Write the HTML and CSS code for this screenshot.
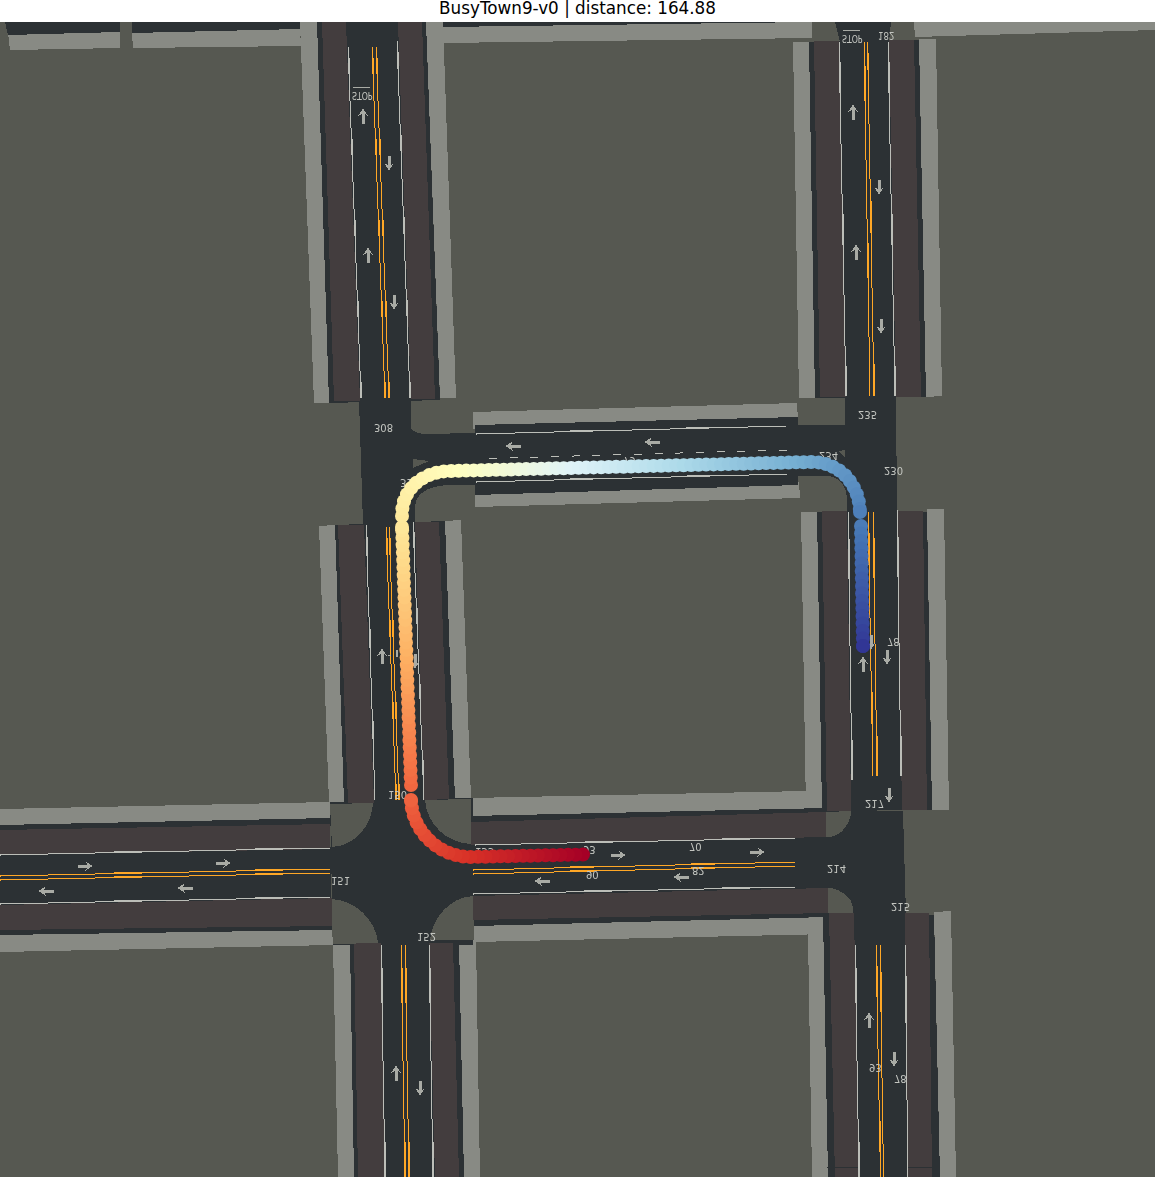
FILE: index.html
```html
<!DOCTYPE html>
<html lang="en">
<head>
<meta charset="utf-8">
<title>BusyTown9-v0</title>
<link rel="stylesheet" href="styles.css">
</head>
<body>
<header class="title">BusyTown9-v0 | distance: 164.88</header>
<svg class="map" viewBox="0 22 1155 1155" width="1155" height="1155" xmlns="http://www.w3.org/2000/svg">
  <defs>
    <path id="arrow" d="M0,-7.5 L4.5,-0.5 L1.5,-2 L1.5,7.5 L-1.5,7.5 L-1.5,-2 L-4.5,-0.5 Z"/>
  </defs>
  <g class="crisp">
    <rect class="ground" x="0" y="22" width="1155" height="1155"/>

    <g class="walk">
      <polygon points="8,33 120,32 120,48 10,50"/>
      <polygon points="132,33 300,29 301,46 133,48"/>
      <polygon points="443,27 812,22 812,38 443,43"/>
      <polygon points="914,22 1155,22 1155,30 915,37"/>
      <polygon points="300,22 317,22 329,403 314,403"/>
      <polygon points="426,22 443,22 456,398 440,398"/>
      <polygon points="793,42 809,42 815,398 799,398"/>
      <polygon points="919,39 936,39 942,396 926,397"/>
      <polygon points="473,412 797,403 798,420 473,429"/>
      <polygon points="475,490 799,482 800,498 475,507"/>
      <polygon points="319,526 335,525 345,803 329,803"/>
      <polygon points="445,521 461,520 471,799 455,800"/>
      <polygon points="801,512 817,512 822,811 806,811"/>
      <polygon points="927,509 944,509 949,810 932,810"/>
      <polygon points="470,798 806,791 806,809 470,816"/>
      <polygon points="474,926 829,917 829,934 474,942"/>
      <polygon points="0,809 330,802 330,818 0,825"/>
      <polygon points="0,935 332,928 333,945 0,952"/>
      <polygon points="333,944 350,944 354,1177 338,1177"/>
      <polygon points="459,940 476,940 480,1177 463,1177"/>
      <polygon points="808,934 824,934 828,1177 812,1177"/>
      <polygon points="934,912 951,911 956,1177 940,1177"/>
    </g>

    <g class="road">
      <polygon points="5,22 120,22 120,32 8,35"/>
      <polygon points="132,22 300,22 300,29 132,33"/>
      <polygon points="443,22 812,22 443,27"/>
      <polygon points="317,22 426,22 440,400 329,403"/>
      <polygon points="835,22 891,22 889,42 840,42"/>
      <polygon points="809,42 919,40 926,397 815,398"/>
      <path d="M359,400 L411,400 L411,428 Q413,433 425,434 L475,433 L475,425 L798,417 L798,425 L845,425 L845,397 L896,397 L897,512 L847,512 L847,500 Q846,477 827,476 L798,476 L798,485 L475,495 L475,485 L448,485 Q416,487 415,507 L415,522 L363,525 Z"/>
      <polygon points="335,525 445,521 455,800 344,803"/>
      <polygon points="817,512 927,512 932,810 822,811"/>
      <polygon points="470,816 826,808 828,917 474,926"/>
      <polygon points="0,825 330,818 332,930 0,935"/>
      <polygon points="330,802 473,798 473,945 333,945"/>
      <polygon points="826,811 903,811 906,915 828,915"/>
      <polygon points="350,943 459,941 464,1177 354,1177"/>
      <polygon points="823,915 934,915 940,1177 828,1177"/>
    </g>

    <g class="verge">
      <polygon points="322,22 346,22 360,401 334,401"/>
      <polygon points="398,22 422,22 435,399 411,399"/>
      <polygon points="814,41 839,41 846,397 820,397"/>
      <polygon points="889,40 914,40 921,397 896,397"/>
      <polygon points="338,525 364,525 374,803 348,803"/>
      <polygon points="415,522 439,522 449,799 424,800"/>
      <polygon points="822,511 847,511 851,811 827,811"/>
      <polygon points="897,511 923,511 927,810 902,810"/>
      <polygon points="0,830 330,824 330,849 0,855"/>
      <polygon points="0,905 332,898 332,926 0,930"/>
      <polygon points="471,822 826,812 826,837 471,845"/>
      <polygon points="473,896 828,888 828,913 473,920"/>
      <polygon points="354,943 381,943 385,1177 358,1177"/>
      <polygon points="429,943 453,943 459,1177 435,1177"/>
      <polygon points="829,913 854,913 859,1177 835,1177"/>
      <polygon points="905,913 929,913 932,1177 908,1177"/>
    </g>

    <g class="ground">
      <path d="M330,804 L373,803 C372,825 355,846 332,847 Z"/>
      <path d="M425,800 L471,799 L471,844 C447,843 427,825 425,800 Z"/>
      <path d="M332,899 C355,900 376,920 378,943 L333,944 Z"/>
      <path d="M473,896 C450,897 432,918 430,940 L473,940 Z"/>
      <path d="M826,812 L851,811 C851,822 842,836 830,837 L826,837 Z"/>
      <path d="M828,888 L831,888 C842,890 852,898 853,907 L853,913 L828,913 Z"/>
      <polygon points="413,459 429,461 413,468"/>
      <polygon points="838,451 845,450 845,458"/>
    </g>

    <rect class="road" x="827" y="1167" width="113" height="1"/>

    <g class="white lanes">
      <line x1="348" y1="47" x2="361" y2="398"/>
      <line x1="397" y1="41" x2="410" y2="398"/>
      <line x1="839" y1="42" x2="846" y2="396"/>
      <line x1="888" y1="42" x2="895" y2="396"/>
      <line x1="848" y1="512" x2="852" y2="780"/>
      <line x1="897" y1="510" x2="901" y2="776"/>
      <line x1="366" y1="525" x2="375" y2="800"/>
      <line x1="413" y1="522" x2="424" y2="800"/>
      <line x1="381" y1="945" x2="385" y2="1177"/>
      <line x1="429" y1="945" x2="433" y2="1177"/>
      <line x1="855" y1="945" x2="859" y2="1177"/>
      <line x1="905" y1="945" x2="908" y2="1177"/>
      <line x1="476" y1="434" x2="786" y2="426"/>
      <line x1="476" y1="482" x2="787" y2="474"/>
      <line x1="0" y1="855" x2="330" y2="848"/>
      <line x1="0" y1="904" x2="330" y2="897"/>
      <line x1="475" y1="845" x2="795" y2="838"/>
      <line x1="473" y1="894" x2="795" y2="887"/>
    </g>
    <g class="white">
      <line class="dash" x1="489" y1="458.4" x2="787" y2="450"/>
    </g>
    <g class="amber lanes">
      <line x1="372" y1="47" x2="385" y2="398"/>
      <line x1="376" y1="47" x2="389" y2="398"/>
      <line x1="864" y1="42" x2="870" y2="396"/>
      <line x1="867.5" y1="42" x2="874" y2="396"/>
      <line x1="868" y1="512" x2="873" y2="776"/>
      <line x1="873" y1="512" x2="877" y2="776"/>
      <line x1="386" y1="527" x2="396" y2="800"/>
      <line x1="389" y1="527" x2="399" y2="800"/>
      <line x1="401" y1="945" x2="405" y2="1177"/>
      <line x1="405" y1="945" x2="409" y2="1177"/>
      <line x1="876" y1="945" x2="880.5" y2="1177"/>
      <line x1="880" y1="945" x2="883.5" y2="1177"/>
      <line x1="0" y1="876" x2="330" y2="869"/>
      <line x1="0" y1="880" x2="330" y2="873"/>
      <line x1="473" y1="870" x2="795" y2="862"/>
      <line x1="473" y1="874" x2="795" y2="866"/>
    </g>
    <g class="arrows">
      <use href="#arrow" transform="translate(363 116)"/>
      <use href="#arrow" transform="translate(389 163) rotate(180)"/>
      <use href="#arrow" transform="translate(368 255)"/>
      <use href="#arrow" transform="translate(394 302) rotate(180)"/>
      <use href="#arrow" transform="translate(853 112)"/>
      <use href="#arrow" transform="translate(879 187) rotate(180)"/>
      <use href="#arrow" transform="translate(856 252)"/>
      <use href="#arrow" transform="translate(881 326) rotate(180)"/>
      <use href="#arrow" transform="translate(863 664)"/>
      <use href="#arrow" transform="translate(871 642) rotate(180)"/>
      <use href="#arrow" transform="translate(887 657) rotate(180)"/>
      <use href="#arrow" transform="translate(889 795) rotate(180)"/>
      <use href="#arrow" transform="translate(382 656)"/>
      <use href="#arrow" transform="translate(415 661) rotate(180)"/>
      <use href="#arrow" transform="translate(396 1073)"/>
      <use href="#arrow" transform="translate(420 1088) rotate(180)"/>
      <use href="#arrow" transform="translate(869 1020)"/>
      <use href="#arrow" transform="translate(894 1059) rotate(180)"/>
      <use href="#arrow" transform="translate(85 866) rotate(90)"/>
      <use href="#arrow" transform="translate(223 863) rotate(90)"/>
      <use href="#arrow" transform="translate(46 891) rotate(-90)"/>
      <use href="#arrow" transform="translate(185 888) rotate(-90)"/>
      <use href="#arrow" transform="translate(618 855) rotate(90)"/>
      <use href="#arrow" transform="translate(757 852) rotate(90)"/>
      <use href="#arrow" transform="translate(542 881) rotate(-90)"/>
      <use href="#arrow" transform="translate(681 877) rotate(-90)"/>
      <use href="#arrow" transform="translate(513 446) rotate(-90)"/>
      <use href="#arrow" transform="translate(652 442) rotate(-90)"/>
    </g>
    <g class="bars">
      <rect x="353" y="87" width="17" height="1"/>
      <rect x="843" y="30" width="17" height="1"/>
      <rect x="388" y="655" width="3" height="1"/>
      <rect x="396" y="650" width="2" height="7"/>
    </g>
  </g>

  <g class="labels">
    <text transform="translate(352 92) scale(.78 -1)">STOP</text>
    <text transform="translate(842 35) scale(.78 -1)">STOP</text>
    <text transform="translate(878 32) scale(.86 -1)">182</text>
    <text transform="translate(374 424) scale(1 -1)">308</text>
    <text transform="translate(400 479) scale(1 -1)">310</text>
    <text transform="translate(858 411) scale(1 -1)">235</text>
    <text transform="translate(884 467) scale(1 -1)">230</text>
    <text transform="translate(819 452) scale(1 -1)">234</text>
    <text transform="translate(623 457) scale(1 -1)">79</text>
    <text transform="translate(865 800) scale(1 -1)">217</text>
    <text transform="translate(827 865) scale(1 -1)">214</text>
    <text transform="translate(891 903) scale(1 -1)">215</text>
    <text transform="translate(388 791) scale(1 -1)">150</text>
    <text transform="translate(331 877) scale(1 -1)">151</text>
    <text transform="translate(417 933) scale(1 -1)">152</text>
    <text transform="translate(475 848) scale(1 -1)">153</text>
    <text transform="translate(583 846) scale(1 -1)">93</text>
    <text transform="translate(586 871) scale(1 -1)">90</text>
    <text transform="translate(689 843) scale(1 -1)">70</text>
    <text transform="translate(692 867) scale(1 -1)">82</text>
    <text transform="translate(887 638) scale(1 -1)">78</text>
    <text transform="translate(894 1075) scale(1 -1)">78</text>
    <text transform="translate(869 1064) scale(1 -1)">93</text>
  </g>

  <g id="trail"></g>
</svg>
<script src="map.js"></script>
</body>
</html>
```
FILE: styles.css
```css
html, body {
  margin: 0;
  padding: 0;
  background: #ffffff;
}

.title {
  height: 22px;
  line-height: 17px;
  text-align: center;
  font-family: "DejaVu Sans", sans-serif;
  font-size: 16.8px;
  color: #000000;
  white-space: nowrap;
}

.map {
  display: block;
}

.crisp {
  shape-rendering: crispEdges;
}

.ground {
  fill: #565851;
}

.walk {
  fill: #888a84;
}

.road {
  fill: #2c3134;
}

.verge {
  fill: #433d3e;
}

.white line,
.white path {
  stroke: #bcbeb8;
  stroke-width: 1;
  fill: none;
}

.white .dash {
  stroke-dasharray: 8 12.7;
}

.amber path {
  stroke: #ffa726;
  stroke-width: 1;
  fill: none;
}

.arrows {
  fill: #a9aba5;
}

.bars {
  fill: #a9aba5;
}

.labels {
  opacity: 0.99;
}

.labels text {
  font-family: "DejaVu Sans", sans-serif;
  font-size: 10px;
  fill: #c6c8c3;
}
```
FILE: map.js
```js
(function () {
  var NS = "http://www.w3.org/2000/svg";

  /* Lane markings: each straight line becomes a stair of whole-pixel runs.
     Every third run overlaps the previous one, which reads as a thicker stretch. */
  function stepped(x1, y1, x2, y2) {
    var vertical = Math.abs(y2 - y1) >= Math.abs(x2 - x1);
    var a0 = vertical ? y1 : x1, a1 = vertical ? y2 : x2;
    var b0 = vertical ? x1 : y1, b1 = vertical ? x2 : y2;
    var slope = (b1 - b0) / (a1 - a0);

    var runs = [], start = a0, cur = Math.floor(b0) + 0.5;
    for (var a = a0 + 1; a <= a1; a++) {
      var next = Math.floor(b0 + (a - a0) * slope) + 0.5;
      if (next !== cur) {
        runs.push([cur, start, a]);
        start = a;
        cur = next;
      }
    }
    runs.push([cur, start, a1]);

    function seg(b, from, to) {
      return vertical ? "M" + b + "," + from + "V" + to : "M" + from + "," + b + "H" + to;
    }
    return runs.map(function (r, i) {
      var from = r[1];
      if (i % 3 === 1) { from -= Math.round((runs[i - 1][2] - runs[i - 1][1]) * 0.6); }
      return seg(r[0], from, r[2]);
    }).join("");
  }

  document.querySelectorAll(".lanes line").forEach(function (line) {
    var get = function (n) { return parseFloat(line.getAttribute(n)); };
    var path = document.createElementNS(NS, "path");
    path.setAttribute("d", stepped(get("x1"), get("y1"), get("x2"), get("y2")));
    line.parentNode.replaceChild(path, line);
  });

  /* Trajectory of the agent: runs of waypoints, sampled into evenly spaced dots. */
  var RADIUS = 7;
  var STEP = 7.5;
  var STOPS = ["#a50026", "#d73027", "#f46d43", "#fdae61", "#fee090", "#ffffbf",
               "#e0f3f8", "#abd9e9", "#74add1", "#4575b4", "#313695"];

  function cubic(p0, p1, p2, p3, n) {
    var out = [];
    for (var i = 0; i <= n; i++) {
      var t = i / n, u = 1 - t;
      out.push([
        u * u * u * p0[0] + 3 * u * u * t * p1[0] + 3 * u * t * t * p2[0] + t * t * t * p3[0],
        u * u * u * p0[1] + 3 * u * u * t * p1[1] + 3 * u * t * t * p2[1] + t * t * t * p3[1]
      ]);
    }
    return out;
  }

  var runs = [
    [[583, 854.5], [470, 857]].concat(cubic([470, 857], [439, 857], [412, 831], [411, 800], 24)),
    [[411, 785], [402, 527]],
    cubic([402, 516], [401, 490], [422, 471.5], [450, 471], 24).concat([[810, 462]]).concat(
      cubic([810, 462], [838, 461], [859, 482], [860, 512], 24)),
    [[861, 526], [863, 646]]
  ];

  function sample(pts) {
    var out = [pts[0]], carry = 0;
    for (var i = 1; i < pts.length; i++) {
      var a = pts[i - 1], b = pts[i];
      var len = Math.hypot(b[0] - a[0], b[1] - a[1]);
      var d = STEP - carry;
      while (d <= len) {
        out.push([a[0] + (b[0] - a[0]) * d / len, a[1] + (b[1] - a[1]) * d / len]);
        d += STEP;
      }
      carry = len - (d - STEP);
    }
    out.push(pts[pts.length - 1]);
    return out;
  }

  var dots = [];
  runs.forEach(function (run) { dots = dots.concat(sample(run)); });

  function hex(c) {
    return [1, 3, 5].map(function (i) { return parseInt(c.substr(i, 2), 16); });
  }

  function color(t) {
    var x = Math.min(t, 0.9999) * (STOPS.length - 1);
    var i = Math.floor(x), f = x - i;
    var a = hex(STOPS[i]), b = hex(STOPS[i + 1]);
    return "rgb(" + a.map(function (v, k) { return Math.round(v + (b[k] - v) * f); }).join(",") + ")";
  }

  var group = document.getElementById("trail");
  dots.forEach(function (p, i) {
    var c = document.createElementNS(NS, "circle");
    c.setAttribute("cx", p[0].toFixed(1));
    c.setAttribute("cy", p[1].toFixed(1));
    c.setAttribute("r", RADIUS);
    c.setAttribute("fill", color(i / (dots.length - 1)));
    group.appendChild(c);
  });
})();
```
